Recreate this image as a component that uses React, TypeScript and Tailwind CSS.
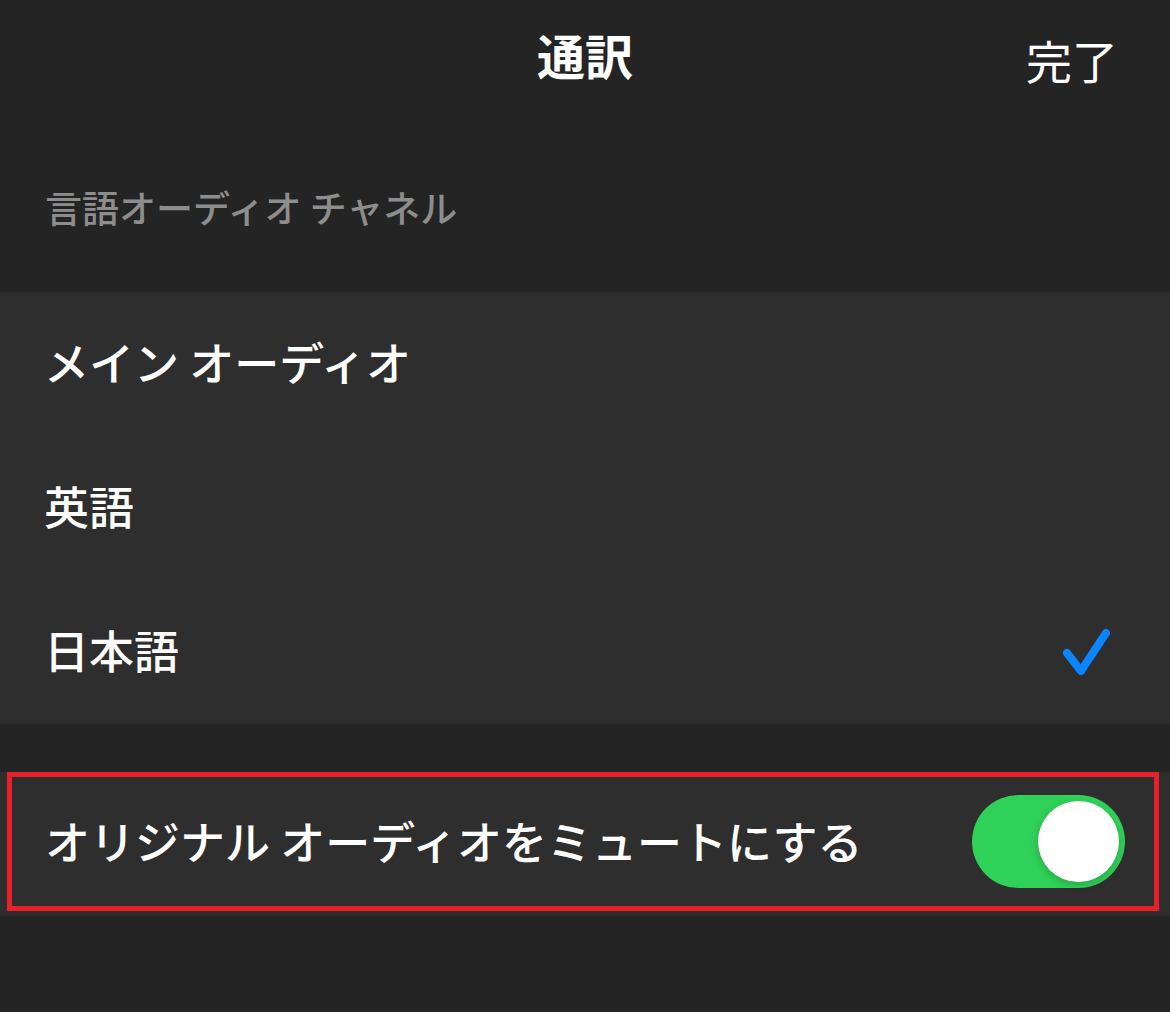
const font = { fontFamily: '"Noto Sans CJK JP", "Noto Sans", sans-serif' };

const channels = [
  { label: "メイン オーディオ", selected: false },
  { label: "英語", selected: false },
  { label: "日本語", selected: true },
];

function Check() {
  return (
    <svg viewBox="0 0 50 50" className="h-[50px] w-[50px]" fill="none">
      <path
        d="M7 26 L21 44 L46 6"
        stroke="#0a84ff"
        strokeWidth="8"
        strokeLinecap="round"
        strokeLinejoin="round"
      />
    </svg>
  );
}

function Toggle({ on }: { on: boolean }) {
  return (
    <div
      className={`flex h-[93px] w-[153px] items-center rounded-full px-[6px] ${
        on ? "justify-end bg-[#30d158]" : "justify-start bg-[#39393d]"
      }`}
    >
      <div className="h-[81px] w-[81px] rounded-full bg-white shadow-[0_3px_8px_rgba(0,0,0,0.2)]" />
    </div>
  );
}

export default function App() {
  return (
    <div className="min-h-[1012px] w-[1170px] bg-[#242424] text-white" style={font}>
      <header className="relative flex h-[116px] items-center justify-center pb-[8px]">
        <h1 className="text-[48px] font-bold leading-none">通訳</h1>
        <button className="absolute right-[52px] top-[36px] text-[46px] leading-none text-white">
          完了
        </button>
      </header>

      <div className="h-[176px] px-[45px] pt-[69px]">
        <p className="text-[37px] font-medium leading-[44px] text-[#8d8d8d]">言語オーディオ チャネル</p>
      </div>

      <ul className="bg-[#2e2e2e]">
        {channels.map((c) => (
          <li
            key={c.label}
            className="flex h-[144px] items-center justify-between pl-[44px] pr-[60px]"
          >
            <span className="pb-[4px] text-[45px] font-medium leading-[52px]">{c.label}</span>
            {c.selected && <Check />}
          </li>
        ))}
      </ul>

      <div className="mt-[48px] h-[144px] bg-[#2e2e2e] pl-[7px] pr-[11px]">
        <div className="flex h-[139px] items-center justify-between border-[5px] border-[#e8202a] pl-[33px] pr-[29px]">
          <span className="pb-[2px] text-[45px] font-medium leading-[52px]">
            オリジナル オーディオをミュートにする
          </span>
          <Toggle on />
        </div>
      </div>
    </div>
  );
}
